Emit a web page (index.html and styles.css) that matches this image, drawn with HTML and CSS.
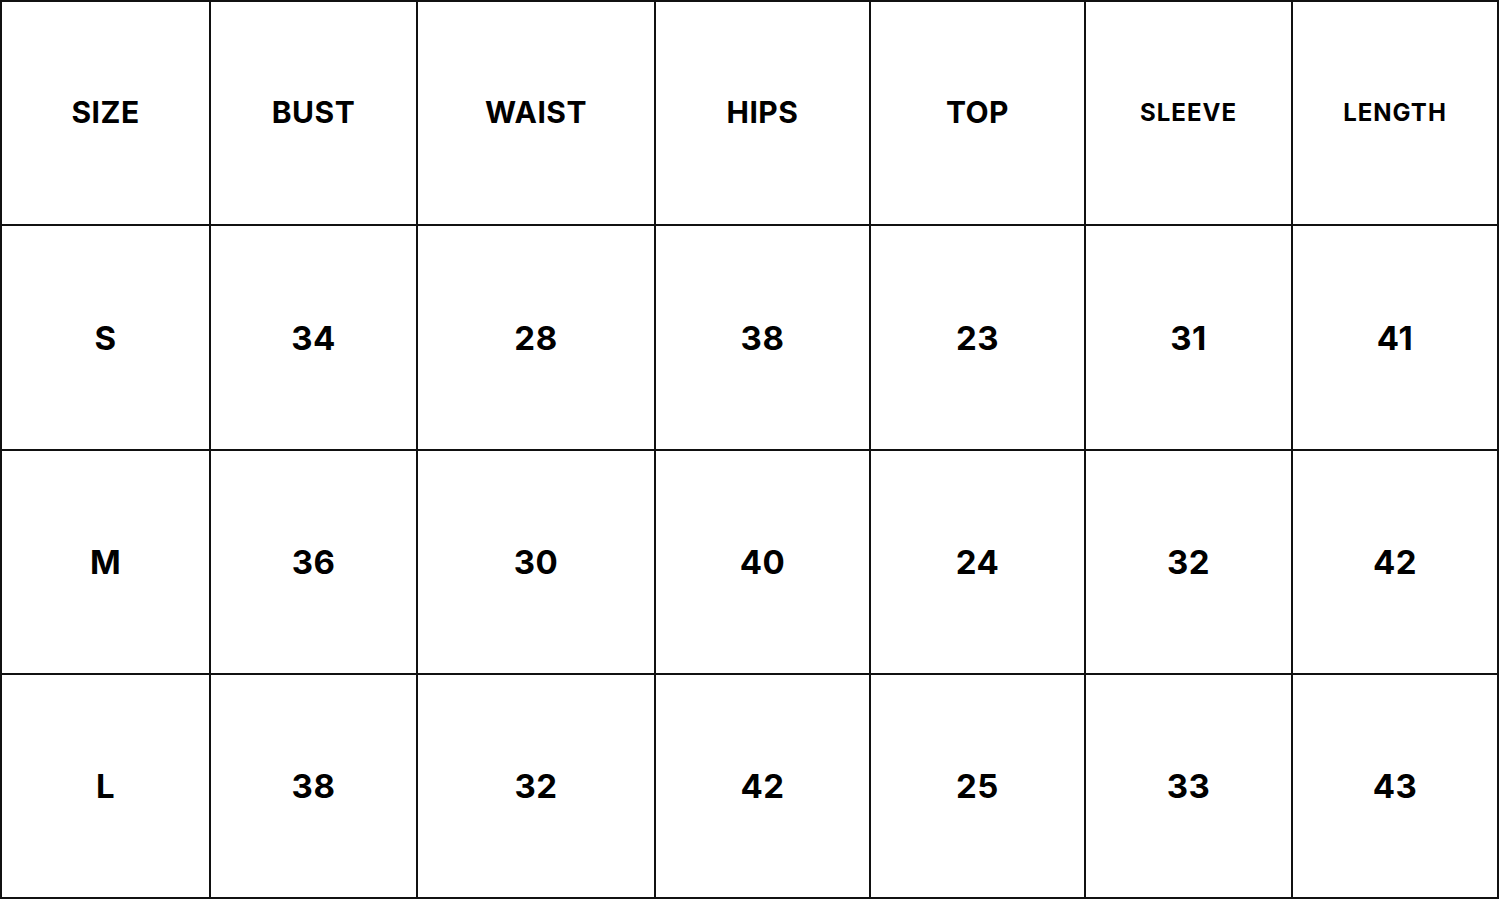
FILE: index.html
```html
<!DOCTYPE html>
<html lang="en">
<head>
<meta charset="utf-8">
<title>Size Chart</title>
<link rel="stylesheet" href="styles.css">
</head>
<body>
<div class="chart">
  <div class="cell head">SIZE</div>
  <div class="cell head">BUST</div>
  <div class="cell head">WAIST</div>
  <div class="cell head">HIPS</div>
  <div class="cell head">TOP</div>
  <div class="cell head small">SLEEVE</div>
  <div class="cell head small">LENGTH</div>

  <div class="cell">S</div>
  <div class="cell">34</div>
  <div class="cell">28</div>
  <div class="cell">38</div>
  <div class="cell">23</div>
  <div class="cell">31</div>
  <div class="cell">41</div>

  <div class="cell">M</div>
  <div class="cell">36</div>
  <div class="cell">30</div>
  <div class="cell">40</div>
  <div class="cell">24</div>
  <div class="cell">32</div>
  <div class="cell">42</div>

  <div class="cell">L</div>
  <div class="cell">38</div>
  <div class="cell">32</div>
  <div class="cell">42</div>
  <div class="cell">25</div>
  <div class="cell">33</div>
  <div class="cell">43</div>
</div>
</body>
</html>
```
FILE: styles.css
```css
html, body {
  margin: 0;
  padding: 0;
  background: #ffffff;
}

.chart {
  width: 1499px;
  height: 899px;
  box-sizing: border-box;
  display: grid;
  grid-template-columns: 207px 205px 236px 213px 213px 205px 204px;
  grid-template-rows: 222px 223px 222px 222px;
  gap: 2px;
  padding: 2px;
  background: #111111;
}

.cell {
  background: #ffffff;
  display: flex;
  align-items: center;
  justify-content: center;
  font-family: "Inter", "Liberation Sans", sans-serif;
  font-weight: 700;
  font-size: 33px;
  color: #000000;
  letter-spacing: 0.5px;
}

.cell.head {
  font-size: 30px;
  padding-bottom: 2px;
}

.cell.head.small {
  font-size: 24px;
  letter-spacing: 1px;
}
```
